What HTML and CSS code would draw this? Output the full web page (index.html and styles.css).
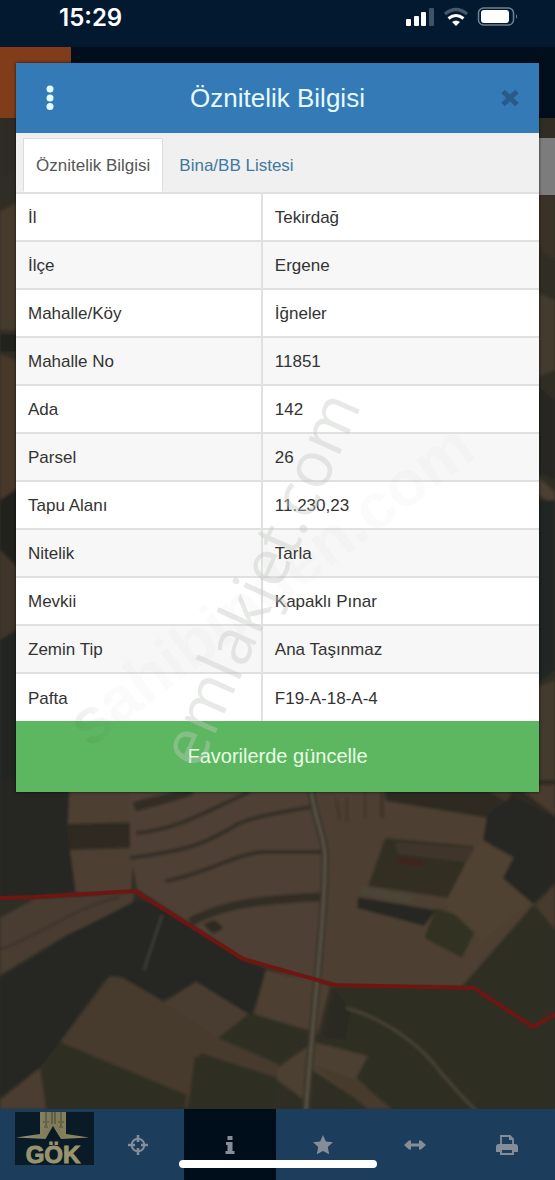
FILE: index.html
```html
<!DOCTYPE html>
<html lang="tr">
<head>
<meta charset="utf-8">
<meta name="viewport" content="width=device-width, initial-scale=1">
<title>Öznitelik Bilgisi</title>
<link rel="stylesheet" href="styles.css">
</head>
<body>
<div class="app">
  <svg class="map" viewBox="0 0 555 1180" preserveAspectRatio="xMidYMax slice" aria-hidden="true">
    <defs>
      <filter id="soft" x="0" y="0" width="100%" height="100%"><feGaussianBlur stdDeviation="1.5"/></filter>
    </defs>
    <rect width="555" height="1180" fill="#302e24"/>
    <g filter="url(#soft)">
      <!-- left margin -->
      <path fill="#2d2c25" d="M0 110H30V165L0 180z"/>
      <path fill="#473b2d" d="M0 212L30 195V330H0z"/>
      <path fill="#20241f" d="M0 334H30V352H0z"/>
      <path fill="#46382c" d="M0 354L30 366V482L0 500z"/>
      <path fill="#20241f" d="M0 500L30 480V580L0 550z"/>
      <path fill="#3f362b" d="M0 550L30 580V620L0 640z"/>
      <path fill="#222520" d="M0 640L30 622V800H0z"/>
      <!-- right margin -->
      <path fill="#3a3228" d="M530 195H555V260L530 240z"/>
      <path fill="#433a2e" d="M530 290L555 300V370L530 380z"/>
      <path fill="#272620" d="M530 380L555 400V480L530 470z"/>
      <path fill="#4c3f30" d="M530 470L555 492V505L530 490z"/>
      <path fill="#242620" d="M530 500H555V670L530 690z"/>
      <path fill="#433a2f" d="M530 690L555 680V800H530z"/>
      <!-- fields under the card, west -->
      <path fill="#262722" d="M0 780H75V892L0 899z"/>
      <path fill="#4d4033" d="M70 780H135V824H68z"/>
      <path fill="#2e2b23" d="M66 824L136 822V848L70 850z"/>
      <path fill="#4d4033" d="M70 850L134 848L131 892L76 893z"/>
      <path fill="#4f4134" d="M130 780H325L330 900L320 985L243 958L137 889L130 850z"/>
      <g fill="none" stroke="#302d25" stroke-width="6">
        <path stroke-width="10" d="M134 807C155 800 168 800 192 790"/>
        <path stroke-width="4" d="M136 833C180 830 215 806 250 792"/>
        <path stroke-width="4" d="M130 858C190 850 205 844 238 824C258 815 285 812 310 807"/>
        <path stroke-width="4" d="M165 881C200 876 232 855 262 852H321"/>
        <path stroke-width="9" d="M190 922C220 906 250 900 320 897"/>
      </g>
      <path fill="#483d32" d="M0 918L35 899L134 893L132 906L66 935L0 975z"/>
      <path fill="none" stroke="#3f362d" stroke-width="4" d="M0 950C40 935 80 905 120 897"/>
      <path fill="#272821" d="M0 977L66 936L137 900L160 905L240 957L267 970L252 1015L215 1000L197 982L163 1001L120 976L106 978L60 1042L40 1068L0 1098z"/>
      <path fill="none" stroke="#42413a" stroke-width="2" d="M162 915L144 970"/>
      <path fill="#463a2e" d="M110 976L123 978L164 1002L196 982L248 1014L218 1038L278 1064V1078L200 1053L187 1108L60 1042z"/>
      <path fill="#4a3e32" d="M196 982L248 1014L218 1038L165 1003z"/>
      <path fill="#2d2e22" d="M60 1042L187 1095L184 1109H46L40 1068z"/>
      <path fill="#2d2e22" d="M195 1056L278 1080V1109H188z"/>
      <path fill="#4b3c30" d="M0 1100L40 1068L46 1109H0z"/>
      <path fill="#4e4033" d="M266 970L330 986L318 1033L254 1014z"/>
      <path fill="#2d2e22" d="M220 1036L254 1014L312 1032L278 1062z"/>
      <path fill="#2d2a22" d="M203 924L215 920L224 928L213 934z"/>
      <!-- fields east of the road -->
      <path fill="#4e4033" d="M313 780H385L500 820L490 850L535 905L465 986H334L318 980L328 850z"/>
      <path fill="#4e4033" d="M385 802L487 817L480 841L388 826z"/>
      <path fill="#2d2b22" d="M383 780H555V820L487 818L386 801z"/>
      <path fill="#40362b" d="M470 780H515L508 803z"/>
      <path fill="#483a2f" d="M515 785H555V816z"/>
      <path fill="#302f24" d="M385 838L474 846L448 898L368 886z"/>
      <path fill="#3f342a" d="M395 842L475 848L466 862L398 854z"/>
      <path fill="#3e251b" d="M396 856L425 861L423 868L397 863z"/>
      <path fill="#4c4437" d="M362 886L414 896L408 904L360 894z"/>
      <path fill="#272820" d="M358 897L436 910L424 926L357 908z"/>
      <path fill="#303224" d="M436 908L480 922L462 958L424 938z"/>
      <path fill="#4f4233" d="M481 840L514 858L502 880L532 902L482 940L444 904z"/>
      <path fill="#252620" d="M487 815L512 796L555 818V882L533 904L503 878L514 857L483 840z"/>
      <path fill="#463a2f" d="M535 905L555 884V930z"/>
      <path fill="#2d2e22" d="M533 905L555 930V1109H340L322 1060L334 986H462z"/>
      <path fill="#4c3f32" d="M277 1068L314 1042L368 1056L356 1078L390 1109H372L312 1070L304 1100L277 1080z"/>
      <path fill="#463a2e" d="M314 1065L356 1080L392 1109H368z"/>
      <path fill="#292a21" d="M334 990L350 1010L345 1040L322 1036z"/>
      <path fill="none" stroke="#524a3c" stroke-width="2" d="M346 1008C390 1020 425 1050 442 1074C455 1088 464 1100 476 1110"/>
      <g fill="none" stroke="#3d3228" stroke-width="2">
        <path d="M336 798L340 820M347 798V822M365 790V818"/>
        <path stroke-width="4" d="M382 792V818"/>
      </g>
      <path fill="none" stroke="#38352c" stroke-width="8" d="M311 790C315 820 324 835 325 855C325 920 314 1000 306 1110"/>
      <path fill="none" stroke="#665d4c" stroke-width="2" d="M311 790C315 820 324 835 325 855C325 920 314 1000 306 1110"/>
    </g>
    <path fill="none" stroke="#6f1613" stroke-width="4" stroke-linejoin="round" d="M0 898L36 897L135 891L243 959L335 985L474 988L533 1027L555 1014"/>
  </svg>

  <header class="status">
    <time class="clock">15:29</time>
    <svg class="signals" viewBox="0 0 114 22" role="img" aria-label="Sinyal, Wi-Fi, pil">
      <g fill="#fff">
        <rect x="1" y="13" width="5" height="7" rx="1"/><rect x="9" y="10" width="5" height="10" rx="1"/><rect x="16" y="6" width="5" height="14" rx="1"/>
        <rect x="24" y="2" width="5" height="18" rx="1" opacity=".25"/>
        <path d="M51 20l-4-4q4-3 8 0z"/>
      </g>
      <path d="M43.500 12.500q7.500-6 15 0" fill="none" stroke="#fff" stroke-width="3"/>
      <path d="M40 8q11-9 22 0" fill="none" stroke="#fff" stroke-opacity=".27" stroke-width="3.500"/>
      <rect x="73.500" y="2" width="35" height="17" rx="5" fill="none" stroke="#fff" stroke-opacity=".45" stroke-width="1.500"/>
      <rect x="76" y="4" width="28" height="13" rx="3" fill="#fff"/>
      <path d="M111 8v5q2-2.500 0-5z" fill="#fff" fill-opacity=".5"/>
    </svg>
  </header>
  <div class="topbar"><span class="topbar-menu"></span></div>
  <div class="map-space"><span class="map-panel"></span></div>

  <nav class="dock" aria-label="Harita araçları">
    <button class="tool tool-logo" aria-label="Gök">
      <svg viewBox="0 0 79 53" class="logo">
        <defs><linearGradient id="gold" x1="0" x2="1"><stop offset="0" stop-color="#96916f"/><stop offset=".5" stop-color="#7d7858"/><stop offset="1" stop-color="#948c62"/></linearGradient></defs>
        <rect width="79" height="53" fill="#0a1b28"/>
        <path d="M25 0H51V22L74 25.500L46 27L38 15L31 27L1 25.500L25 22z" fill="url(#gold)"/>
        <path d="M31 0v14M37 0v12M40 0v12M46 0v14" stroke="#444934" stroke-width="1"/>
        <path d="M28 10h6M43 10h6M29 15h4M44 15h4" stroke="#656848" stroke-width="2"/>
        <path d="M38 14L30 28H46z" fill="#081925"/>
        <text x="38" y="51" text-anchor="middle" class="logo-text">GÖK</text>
      </svg>
    </button>
    <button class="tool" aria-label="Konum">
      <svg viewBox="0 0 20 20" class="icon"><circle cx="10" cy="10" r="6.300" fill="none" stroke="currentColor" stroke-width="2"/><path d="M10 0v7M10 13v7M0 10h7M13 10h7" stroke="currentColor" stroke-width="2.600"/></svg>
    </button>
    <button class="tool tool-active" aria-label="Bilgi">
      <svg viewBox="0 0 20 20" class="icon"><path fill="currentColor" d="M7.500 1h5v4h-5zM6 7h6.500v9H14.500v3H5.500v-3H7.500v-6H6z"/></svg>
    </button>
    <button class="tool" aria-label="Favoriler">
      <svg viewBox="0 0 20 20" class="icon"><path fill="currentColor" d="M10 0l2.900 6.500 7.100.8-5.200 4.800 1.400 7.200L10 15.900l-6.200 3.400 1.400-7.200L0 7.300l7.100-.8z"/></svg>
    </button>
    <button class="tool" aria-label="Ölçüm">
      <svg viewBox="0 0 22 20" class="icon icon-wide"><path fill="currentColor" d="M0 10l5-4.500h2v3h8v-3h2l5 4.500-5 4.500h-2v-3H7v3H5z"/></svg>
    </button>
    <button class="tool" aria-label="Yazdır">
      <svg viewBox="0 0 22 20" class="icon icon-wide"><path fill="none" stroke="currentColor" stroke-width="1.800" d="M5 10V1h9l3 3v6"/><path fill="currentColor" d="M13 1l4 4h-4zM3 9h16q3 0 3 3v5h-4v3H4v-3H0v-5q0-3 3-3z"/><path fill="#1d3f5e" d="M6 15h10v3H6z"/></svg>
    </button>
  </nav>
  <span class="home-indicator"></span>

  <div class="overlay">
    <section class="card" role="dialog" aria-labelledby="title">
      <header class="card-head">
        <button class="icon-button" aria-label="Menü"><svg viewBox="0 0 8 26" class="dots" fill="#e4fbff"><circle cx="4" cy="4" r="3.500"/><circle cx="4" cy="13" r="3.500"/><circle cx="4" cy="21.500" r="3.500"/></svg></button>
        <h1 id="title" class="card-title">Öznitelik Bilgisi</h1>
        <button class="icon-button" aria-label="Kapat"><svg viewBox="0 0 18 18" class="close"><path d="M2 2.500L16 15.500M16 2.500L2 15.500" stroke="#285b8c" stroke-width="5"/></svg></button>
      </header>
      <div class="tabs" role="tablist">
        <button class="tab tab-active" role="tab" aria-selected="true">Öznitelik Bilgisi</button>
        <button class="tab" role="tab" aria-selected="false">Bina/BB Listesi</button>
      </div>
      <table class="attributes">
        <tbody>
          <tr><th scope="row">İl</th><td>Tekirdağ</td></tr>
          <tr><th scope="row">İlçe</th><td>Ergene</td></tr>
          <tr><th scope="row">Mahalle/Köy</th><td>İğneler</td></tr>
          <tr><th scope="row">Mahalle No</th><td>11851</td></tr>
          <tr><th scope="row">Ada</th><td>142</td></tr>
          <tr><th scope="row">Parsel</th><td>26</td></tr>
          <tr><th scope="row">Tapu Alanı</th><td>11.230,23</td></tr>
          <tr><th scope="row">Nitelik</th><td>Tarla</td></tr>
          <tr><th scope="row">Mevkii</th><td>Kapaklı Pınar</td></tr>
          <tr><th scope="row">Zemin Tip</th><td>Ana Taşınmaz</td></tr>
          <tr><th scope="row">Pafta</th><td>F19-A-18-A-4</td></tr>
        </tbody>
      </table>
      <button class="favorite">Favorilerde güncelle</button>
      <svg class="watermark" viewBox="0 0 523 729" aria-hidden="true">
        <defs><linearGradient id="fade"><stop offset="0" stop-color="#3d6b3d" stop-opacity=".12"/><stop offset=".1" stop-color="#777" stop-opacity=".03"/><stop offset="1" stop-color="#777" stop-opacity=".03"/></linearGradient></defs>
        <text class="mark-bold" fill="url(#fade)" transform="translate(73 686) rotate(-37)">sahibinden.com</text>
        <text class="mark" transform="translate(183 708) rotate(-66)">emlakjet.com</text>
      </svg>
    </section>
  </div>
</div>
</body>
</html>
```
FILE: styles.css
```css
* { box-sizing: border-box; }

body {
  margin: 0;
  font-family: "Liberation Sans", Arial, sans-serif;
  color: #333;
}

button {
  margin: 0;
  padding: 0;
  border: 0;
  background: none;
  font: inherit;
  color: inherit;
}

.app {
  position: relative;
  min-height: 100vh;
  display: flex;
  flex-direction: column;
  overflow: hidden;
}

.map {
  position: absolute;
  inset: 0;
  width: 100%;
  height: 100%;
}

.status, .topbar, .map-space, .dock { position: relative; }

.status {
  display: flex;
  justify-content: space-between;
  align-items: flex-start;
  height: 47px;
  padding: 6px 36px 0 59px;
  background: #021930;
  color: #fff;
}

.clock {
  font: 600 24px/24px Inter, sans-serif;
}

.signals { width: 114px; height: 22px; }

.topbar { height: 71px; background: #010e1c; }

.topbar-menu {
  display: block;
  width: 71px;
  height: 100%;
  background: #813d19;
}

.map-space {
  flex: 1;
  display: flex;
  justify-content: flex-end;
  padding-top: 20px;
}

.map-panel { width: 16px; height: 57px; background: #7c7c7c; }

.dock {
  display: grid;
  grid-template-columns: repeat(6, minmax(0, 1fr));
  height: 71px;
  padding-right: 2px;
  background: #1c3d5b;
  color: #858e98;
}

.tool {
  display: flex;
  align-items: center;
  justify-content: center;
}

.tool-active { background: #000e1c; }

.tool-logo {
  align-items: flex-start;
  justify-content: flex-start;
  padding: 3px 0 0 15px;
}

.logo { flex: none; width: 79px; height: 53px; overflow: visible; }

.logo-text {
  font: 700 24px "Liberation Sans", Arial, sans-serif;
  fill: #9a946e;
  stroke: #9a946e;
  stroke-width: 1px;
}

.icon { width: 20px; height: 20px; }
.icon-wide { width: 22px; }

.home-indicator {
  position: absolute;
  bottom: 12px;
  left: 50%;
  width: 198px;
  height: 8px;
  border-radius: 4px;
  background: #fff;
  transform: translateX(-50%);
}

.overlay {
  position: absolute;
  inset: 0;
  padding: 63px 16px 0;
}

.card {
  position: relative;
  background: #fff;
  box-shadow: 0 0 3px rgba(0, 0, 0, .7);
}

.card-head {
  display: grid;
  grid-template-columns: 68px 1fr 68px;
  height: 70px;
  background: #347ab7;
}

.card-title {
  margin: 0;
  font-size: 26px;
  line-height: 70px;
  font-weight: 400;
  text-align: center;
  color: #e6faff;
}

.icon-button {
  display: flex;
  align-items: center;
  justify-content: center;
}

.icon-button:last-child { padding-left: 10px; }

.dots { width: 8px; height: 26px; }
.close { width: 18px; height: 18px; }

.tabs {
  display: flex;
  height: 59px;
  padding: 5px 7px 0;
  background: #f0f0f0;
}

.tab {
  padding: 2px 12px 0;
  border: 1px solid transparent;
  font-size: 17px;
  color: #40789f;
}

.tab + .tab { padding: 2px 15px 0; }

.tab-active {
  border-color: #ddd;
  border-bottom-color: #fff;
  background: #fff;
  color: #555;
}

.attributes {
  width: 100%;
  border-collapse: collapse;
  table-layout: fixed;
}

.attributes th, .attributes td {
  height: 48px;
  padding: 2px 12px 0;
  border-top: 2px solid #e0e0e0;
  font-size: 17px;
  line-height: 20px;
  font-weight: 400;
  text-align: left;
}

.attributes th { width: 47%; }
.attributes td { border-left: 2px solid #e0e0e0; }
.attributes tr:nth-child(even) { background: #f7f7f7; }

.favorite {
  display: block;
  width: 100%;
  height: 71px;
  background: #5db760;
  color: #e9ffe6;
  font-size: 20px;
}

.watermark {
  position: absolute;
  inset: 0;
  width: 100%;
  height: 100%;
  pointer-events: none;
}

.mark {
  font: 400 64px "Open Sans", sans-serif;
  fill: #c4c8c4;
  fill-opacity: .4;
}

.mark-bold { font: 700 64px "Liberation Sans", sans-serif; }
```
